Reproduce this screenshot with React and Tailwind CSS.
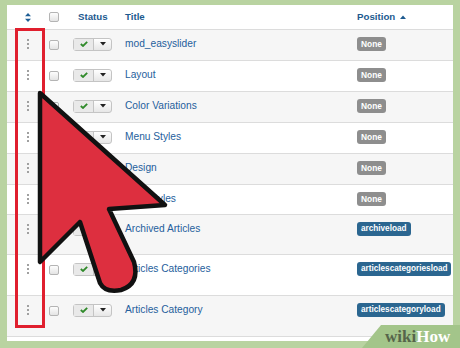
import React from "react";

const rows = [
  { title: "mod_easyslider", pos: "None", h: "h-[31px]" },
  { title: "Layout", pos: "None", h: "h-[31px]" },
  { title: "Color Variations", pos: "None", h: "h-[31px]" },
  { title: "Menu Styles", pos: "None", h: "h-[31px]" },
  { title: "Design", pos: "None", h: "h-[31px]" },
  { title: "Font Styles", pos: "None", h: "h-[30px]" },
  { title: "Archived Articles", pos: "archiveload", h: "h-[40px]" },
  { title: "Articles Categories", pos: "articlescategoriesload", h: "h-[41px]" },
  { title: "Articles Category", pos: "articlescategoryload", h: "h-[41px]" },
];

const Checkbox = () => (
  <span className="block h-[10px] w-[10px] rounded-[2px] border border-[#b4b4b4] bg-gradient-to-b from-[#fdfdfd] to-[#e4e4e4]" />
);

const DragHandle = () => (
  <span className="flex flex-col gap-[2px]">
    <span className="h-[2px] w-[2px] bg-[#a0a0a0]" />
    <span className="h-[2px] w-[2px] bg-[#a0a0a0]" />
    <span className="h-[2px] w-[2px] bg-[#a0a0a0]" />
  </span>
);

const StatusButton = () => (
  <span className="flex h-[13px] w-[39px] rounded-[3px] border border-[#c4c4c4] bg-gradient-to-b from-[#ffffff] to-[#e6e6e6]">
    <span className="flex w-[20px] items-center justify-center border-r border-[#c4c4c4] bg-[#e9e9e9]">
      <svg width="8" height="6" viewBox="0 0 8 6">
        <path d="M0.8 3 L3 5 L7.2 0.8" fill="none" stroke="#2f8a2a" strokeWidth="1.8" />
      </svg>
    </span>
    <span className="flex flex-1 items-center justify-center">
      <svg width="6" height="4" viewBox="0 0 6 4">
        <path d="M0 0 L6 0 L3 3.5 Z" fill="#222" />
      </svg>
    </span>
  </span>
);

const Badge = ({ text }) => {
  const none = text === "None";
  return (
    <span
      className={
        none
          ? "flex h-[14px] items-center whitespace-nowrap rounded-[3px] bg-[#8e8e8e] px-[4px] text-[8.4px] font-bold text-white"
          : "flex h-[14px] items-center whitespace-nowrap rounded-[3px] bg-[#2b6690] px-[4px] text-[8.2px] font-bold text-white"
      }
    >
      {text}
    </span>
  );
};

export default function App() {
  return (
    <div className="relative h-[348px] w-[460px] overflow-hidden bg-[#b9d3a1] px-[7px] pb-[7px] pt-[5px] font-['Liberation_Sans',Arial,sans-serif]">
      <div className="h-full bg-white">
        <div className="flex h-[24px] items-center">
          <div className="flex w-[42px] shrink-0 justify-center">
            <svg width="6" height="9" viewBox="0 0 6 9">
              <path d="M3 0 L6 3.3 L0 3.3 Z M3 9 L6 5.7 L0 5.7 Z" fill="#1f5f96" />
            </svg>
          </div>
          <div className="w-[24px] shrink-0">
            <Checkbox />
          </div>
          <div className="w-[52px] shrink-0 pl-[5px] text-[9.7px] font-bold text-[#1d5a8f]">Status</div>
          <div className="w-[232px] shrink-0 text-[9.7px] font-bold text-[#1d5a8f]">Title</div>
          <div className="flex items-center gap-[5px] text-[9.7px] font-bold text-[#1d5a8f]">
            Position
            <svg width="6" height="4" viewBox="0 0 6 4">
              <path d="M0 4 L6 4 L3 0.5 Z" fill="#1d5a8f" />
            </svg>
          </div>
        </div>
        {rows.map((r, i) => (
          <div
            key={r.title}
            className={
              i % 2 === 0
                ? `flex ${r.h} items-start border-t border-[#dcdcdc] bg-[#f6f6f6] pt-[7px]`
                : `flex ${r.h} items-start border-t border-[#dcdcdc] bg-white pt-[7px]`
            }
          >
            <div className="flex h-[14px] w-[42px] shrink-0 items-center justify-center">
              <DragHandle />
            </div>
            <div className="flex h-[14px] w-[24px] shrink-0 items-center pt-[2px]">
              <Checkbox />
            </div>
            <div className="flex h-[14px] w-[52px] shrink-0 items-center">
              <StatusButton />
            </div>
            <div className="flex h-[14px] w-[232px] shrink-0 items-center text-[10.2px] text-[#25609c]">
              {r.title}
            </div>
            <div className="flex h-[14px] items-center">
              <Badge text={r.pos} />
            </div>
          </div>
        ))}
        <div className="border-t border-[#dcdcdc]" />
      </div>

      <div className="absolute left-[15px] top-[28px] h-[300px] w-[30px] border-[3px] border-[#e01f2e]" />

      <svg className="absolute left-0 top-0" width="460" height="348" viewBox="0 0 460 348">
        <path
          d="M40 93 L165 205 L109 209 L134 262 Q140 284 121 290 Q105 293 100 283 L80 222 L40 262 Z"
          fill="#dd2f3f"
          stroke="#111"
          strokeWidth="4.5"
          strokeLinejoin="round"
        />
      </svg>

      <svg className="absolute left-0 top-0" width="460" height="348" viewBox="0 0 460 348">
        <path d="M381 325 L460 325 L460 348 L362 348 Z" fill="#a3c58a" />
      </svg>
      <div className="absolute left-[385px] top-[328px] font-['Liberation_Serif',serif] text-[17px] font-bold leading-none">
        <span className="text-[#56654b]">wiki</span>
        <span className="text-white">How</span>
      </div>
    </div>
  );
}
